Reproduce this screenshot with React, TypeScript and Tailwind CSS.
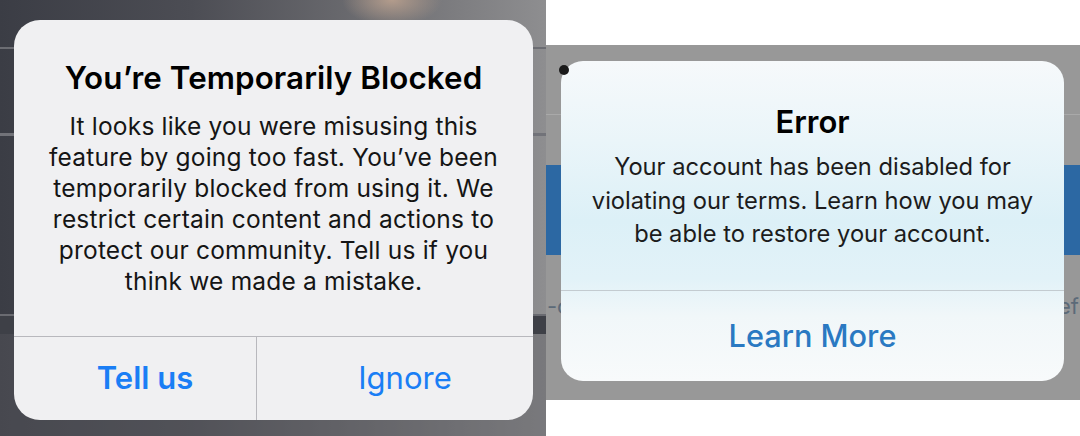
import React from "react";

const font = { fontFamily: "Inter, 'Noto Sans', sans-serif" };

function BlockedPanel() {
  return (
    <div className="relative w-[546px] h-full overflow-hidden bg-[linear-gradient(90deg,#3b3d45_0%,#4c4d54_35%,#6f6f73_70%,#8e8e90_100%)]">
      {/* blurred content behind the alert */}
      <div className="h-[47px] bg-[radial-gradient(ellipse_50px_26px_at_392px_0px,#b39c8c_0%,transparent_100%)]" />
      <div className="h-[2px] bg-[#6c6d73]" />
      <div className="h-[84px]" />
      <div className="h-[3px] bg-[#727379]" />
      <div className="h-[178px]" />
      <div className="h-[20px] bg-[#3e4047] border-t-2 border-[#6a6b71]" />
      <div className="h-[102px] bg-[#5a5b60]/40" />

      <div
        className="absolute left-[14px] top-[20px] w-[519px] h-[400px] rounded-[26px] bg-[#f0f0f2] flex flex-col"
        style={font}
      >
        <h2 className="pt-[40px] text-center text-[31.3px] leading-[36px] font-semibold text-black tracking-[0.1px]">
          You’re Temporarily Blocked
        </h2>
        <p className="mt-[15px] text-center text-[24.5px] leading-[31px] text-[#151515] tracking-[0.2px] whitespace-nowrap">
          It looks like you were misusing this
          <br />
          feature by going too fast. You’ve been
          <br />
          temporarily blocked from using it. We
          <br />
          restrict certain content and actions to
          <br />
          protect our community. Tell us if you
          <br />
          think we made a mistake.
        </p>
        <div className="flex-1" />
        <div className="flex h-[84px] border-t border-[#b8b8bd]">
          <button className="w-[243px] pl-[20px] border-r border-[#b8b8bd] text-[31px] font-semibold text-[#1a7ef5]">
            Tell us
          </button>
          <button className="flex-1 pl-[20px] text-[31px] text-[#1a7ef5]">Ignore</button>
        </div>
      </div>
    </div>
  );
}

function ErrorPanel() {
  return (
    <div className="flex-1 flex flex-col h-full bg-white">
      <div className="h-[45px] bg-white" />
      <div className="relative h-[355px] bg-[#989898] flex flex-col" style={font}>
        <div className="h-[69px]" />
        <div className="h-[1px] bg-[#a9a9a9]" />
        <div className="h-[50px]" />
        <div className="h-[90px] bg-[#2c68a3]" />
        <div className="h-[38px]" />
        <div className="flex justify-between text-[22px] leading-[26px] text-[#5c6a78] px-[1px]">
          <span>-c</span>
          <span>ef</span>
        </div>

        <div className="absolute left-[15px] top-[16px] w-[503px] h-[320px] rounded-[22px] bg-[linear-gradient(180deg,#f6f9fb_0%,#eaf5f9_25%,#dcf0f7_50%,#e2f2f8_68%,#f1f7f9_80%,#f8fafb_100%)] flex flex-col">
          <span className="absolute -left-[2px] top-[4px] w-[10px] h-[10px] rounded-full bg-[#1a1a1a]" />
          <h2 className="pt-[43px] text-center text-[31px] leading-[36px] font-semibold text-black">
            Error
          </h2>
          <p className="mt-[10px] text-center text-[23.7px] leading-[33.5px] text-[#1c1c1c] whitespace-nowrap">
            Your account has been disabled for
            <br />
            violating our terms. Learn how you may
            <br />
            be able to restore your account.
          </p>
          <div className="flex-1" />
          <div className="h-[91px] border-t border-[#c3cbd0] flex items-center justify-center">
            <button className="text-[30.7px] font-medium text-[#2a79c2]">Learn More</button>
          </div>
        </div>
      </div>
      <div className="flex-1 bg-white" />
    </div>
  );
}

export default function App() {
  return (
    <div className="flex w-[1080px] h-[436px] overflow-hidden bg-white">
      <BlockedPanel />
      <ErrorPanel />
    </div>
  );
}
